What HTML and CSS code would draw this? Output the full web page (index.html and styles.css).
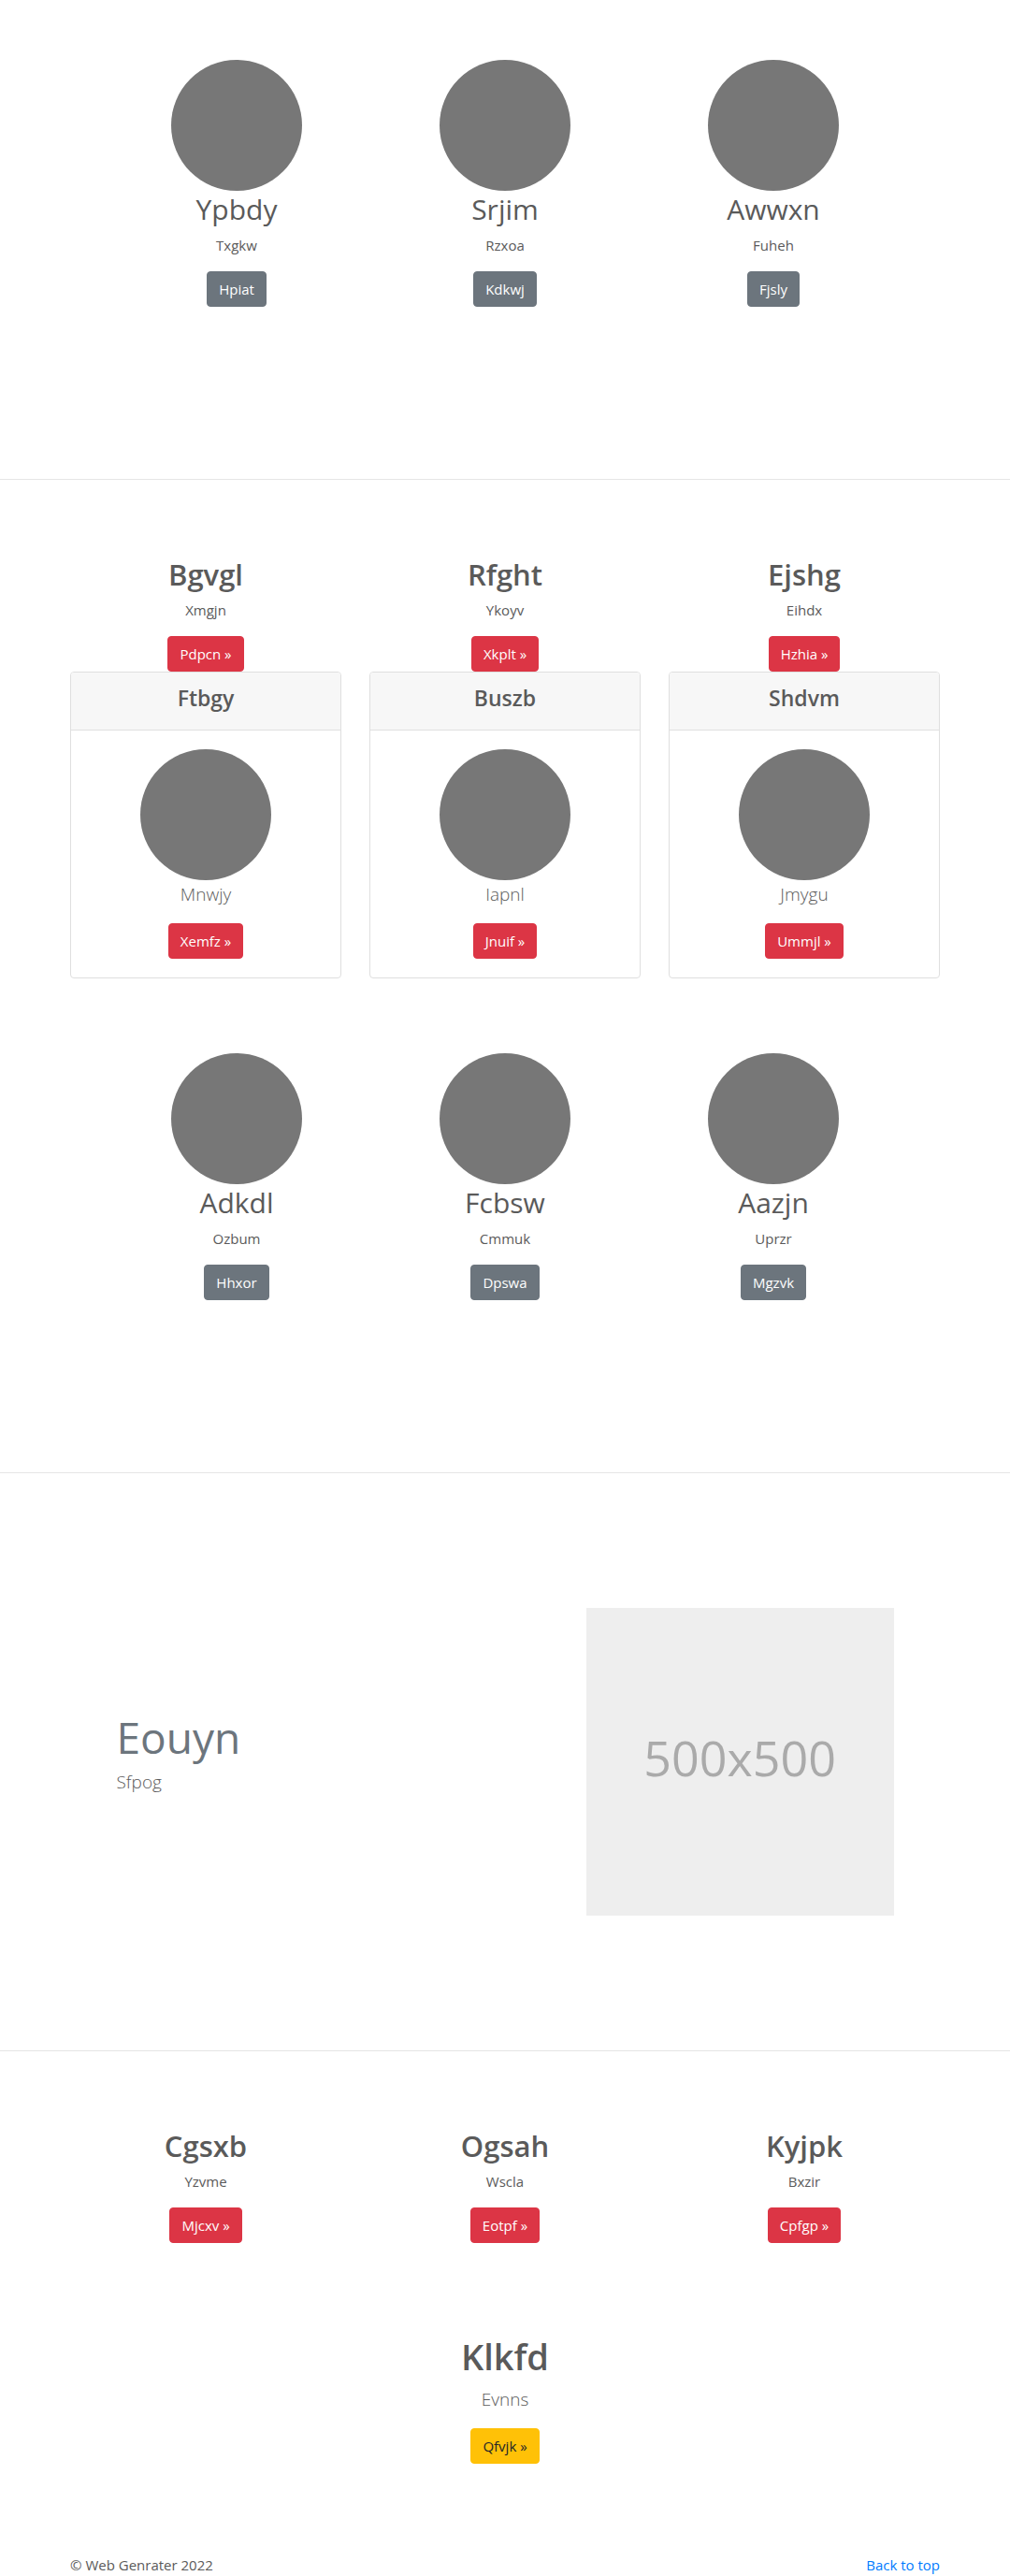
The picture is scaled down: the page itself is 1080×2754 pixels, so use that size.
FILE: index.html
```html
<!DOCTYPE html>
<html lang="en">
<head>
<meta charset="utf-8">
<meta name="viewport" content="width=device-width, initial-scale=1">
<title>Web Genrater</title>
<link rel="stylesheet" href="styles.css">
</head>
<body id="top">
<main>
  <section class="section section-people">
    <div class="inner row">
      <div class="col"><div class="circle"></div><h2 class="title">Ypbdy</h2><p class="text">Txgkw</p><a class="btn btn-secondary" href="#">Hpiat</a></div>
      <div class="col"><div class="circle"></div><h2 class="title">Srjim</h2><p class="text">Rzxoa</p><a class="btn btn-secondary" href="#">Kdkwj</a></div>
      <div class="col"><div class="circle"></div><h2 class="title">Awwxn</h2><p class="text">Fuheh</p><a class="btn btn-secondary" href="#">Fjsly</a></div>
    </div>
  </section>
  <hr class="divider">
  <section class="section section-offers">
    <div class="container row">
      <div class="col"><h2 class="title title-strong">Bgvgl</h2><p class="text">Xmgjn</p><a class="btn btn-danger" href="#">Pdpcn »</a></div>
      <div class="col"><h2 class="title title-strong">Rfght</h2><p class="text">Ykoyv</p><a class="btn btn-danger" href="#">Xkplt »</a></div>
      <div class="col"><h2 class="title title-strong">Ejshg</h2><p class="text">Eihdx</p><a class="btn btn-danger" href="#">Hzhia »</a></div>
    </div>
    <div class="container row">
      <article class="card">
        <header class="card-header"><h3 class="card-title">Ftbgy</h3></header>
        <div class="card-body"><div class="circle"></div><p class="lead">Mnwjy</p><a class="btn btn-danger" href="#">Xemfz »</a></div>
      </article>
      <article class="card">
        <header class="card-header"><h3 class="card-title">Buszb</h3></header>
        <div class="card-body"><div class="circle"></div><p class="lead">Iapnl</p><a class="btn btn-danger" href="#">Jnuif »</a></div>
      </article>
      <article class="card">
        <header class="card-header"><h3 class="card-title">Shdvm</h3></header>
        <div class="card-body"><div class="circle"></div><p class="lead">Jmygu</p><a class="btn btn-danger" href="#">Ummjl »</a></div>
      </article>
    </div>
  </section>
  <section class="section section-team">
    <div class="inner row">
      <div class="col"><div class="circle"></div><h2 class="title">Adkdl</h2><p class="text">Ozbum</p><a class="btn btn-secondary" href="#">Hhxor</a></div>
      <div class="col"><div class="circle"></div><h2 class="title">Fcbsw</h2><p class="text">Cmmuk</p><a class="btn btn-secondary" href="#">Dpswa</a></div>
      <div class="col"><div class="circle"></div><h2 class="title">Aazjn</h2><p class="text">Uprzr</p><a class="btn btn-secondary" href="#">Mgzvk</a></div>
    </div>
  </section>
  <hr class="divider">
  <section class="section section-feature">
    <div class="inner feature">
      <div class="feature-copy"><h2 class="feature-title">Eouyn</h2><p class="lead">Sfpog</p></div>
      <div class="feature-media"><div class="placeholder">500x500</div></div>
    </div>
  </section>
  <hr class="divider">
  <section class="section section-links">
    <div class="container row">
      <div class="col"><h2 class="title title-strong">Cgsxb</h2><p class="text">Yzvme</p><a class="btn btn-danger" href="#">Mjcxv »</a></div>
      <div class="col"><h2 class="title title-strong">Ogsah</h2><p class="text">Wscla</p><a class="btn btn-danger" href="#">Eotpf »</a></div>
      <div class="col"><h2 class="title title-strong">Kyjpk</h2><p class="text">Bxzir</p><a class="btn btn-danger" href="#">Cpfgp »</a></div>
    </div>
  </section>
  <section class="section section-cta">
    <div class="container col"><h1 class="cta-title">Klkfd</h1><p class="lead">Evnns</p><a class="btn btn-warning" href="#">Qfvjk »</a></div>
  </section>
</main>
<footer class="container footer"><span>© Web Genrater 2022</span><a class="link" href="#top">Back to top</a></footer>
</body>
</html>
```
FILE: styles.css
```css
* { box-sizing: border-box; }

body {
  margin: 0;
  background: #fff;
  color: #5a5a5a;
  font-family: "Open Sans", "Noto Sans", sans-serif;
  font-size: 15px;
  line-height: 24px;
}

h1, h2, h3, p { margin: 0; }

.container {
  width: calc(100% - 30px);
  max-width: 930px;
  margin: 0 auto;
}

.inner {
  width: 100%;
  max-width: 861px;
  margin: 0 auto;
}

.row {
  display: grid;
  grid-template-columns: repeat(3, 1fr);
}

.container.row { column-gap: 30px; }

.col,
.card-body {
  display: flex;
  flex-direction: column;
  align-items: center;
  text-align: center;
}

.section-people { padding: 64px 0 184px; }
.section-offers { padding: 81px 0 80px; }
.section-team { padding-bottom: 184px; }
.section-feature { padding: 144px 0; }
.section-links { padding: 81px 0 96px; }
.section-cta { padding-bottom: 96px; }

.divider {
  margin: 0;
  border: 0;
  border-top: 1px solid #e5e5e5;
}

.circle {
  width: 140px;
  height: 140px;
  border-radius: 50%;
  background: #777;
}

.title {
  margin-bottom: 6px;
  font-size: 30px;
  font-weight: 400;
  line-height: 40px;
}

.title-strong {
  font-size: 31px;
  font-weight: 600;
}

.text { margin-bottom: 16px; }

.lead {
  margin-bottom: 16px;
  font-size: 19px;
  font-weight: 300;
  line-height: 30px;
}

.btn {
  padding: 6px 12px;
  border: 1px solid transparent;
  border-radius: 4px;
  color: #fff;
  text-decoration: none;
}

.btn-secondary { background-color: #6c757d; border-color: #6c757d; }
.btn-danger { background-color: #dc3545; border-color: #dc3545; }
.btn-warning { background-color: #ffc107; border-color: #ffc107; color: #212529; }

.card {
  border: 1px solid #dfdfdf;
  border-radius: 4px;
  overflow: hidden;
}

.card-header {
  padding: 12px 20px 18px;
  border-bottom: 1px solid #dfdfdf;
  background: #f7f7f7;
  text-align: center;
}

.card-title {
  font-size: 23px;
  font-weight: 600;
  line-height: 31px;
}

.card-body { padding: 20px; }

.feature {
  display: grid;
  grid-template-columns: 7fr 5fr;
  align-items: center;
}

.feature-copy,
.feature-media { padding: 0 15px; }

.feature-title {
  margin-bottom: 6px;
  color: #6c757d;
  font-size: 46px;
  font-weight: 400;
  line-height: 54px;
}

.placeholder {
  display: flex;
  align-items: center;
  justify-content: center;
  aspect-ratio: 1;
  padding-bottom: 8px;
  background: #eee;
  color: #aaa;
  font-size: 52px;
}

.cta-title {
  margin-bottom: 6px;
  font-size: 38px;
  font-weight: 600;
  line-height: 50px;
}

.footer {
  display: flex;
  justify-content: space-between;
}

.link { color: #007bff; text-decoration: none; }

@media (max-width: 767px) {
  .row, .feature { grid-template-columns: 1fr; row-gap: 24px; }
}
```
